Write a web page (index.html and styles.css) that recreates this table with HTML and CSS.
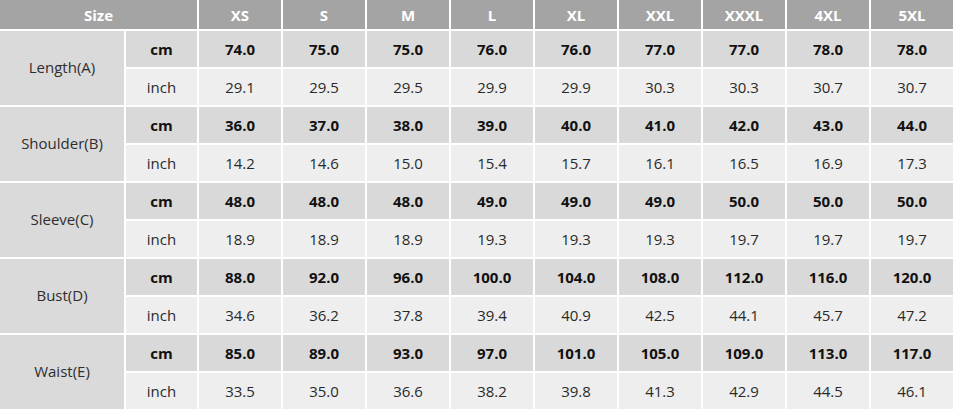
FILE: index.html
```html
<!DOCTYPE html>
<html>
<head>
<meta charset="utf-8">
<link rel="stylesheet" href="styles.css">
</head>
<body>
<div class="chart">
  <div class="cell head size">Size</div>
  <div class="cell head">XS</div>
  <div class="cell head">S</div>
  <div class="cell head">M</div>
  <div class="cell head">L</div>
  <div class="cell head">XL</div>
  <div class="cell head">XXL</div>
  <div class="cell head">XXXL</div>
  <div class="cell head">4XL</div>
  <div class="cell head">5XL</div>

  <div class="cell label">Length(A)</div>
  <div class="cell cm unit">cm</div>
  <div class="cell cm">74.0</div><div class="cell cm">75.0</div><div class="cell cm">75.0</div><div class="cell cm">76.0</div><div class="cell cm">76.0</div><div class="cell cm">77.0</div><div class="cell cm">77.0</div><div class="cell cm">78.0</div><div class="cell cm">78.0</div>
  <div class="cell in unit">inch</div>
  <div class="cell in">29.1</div><div class="cell in">29.5</div><div class="cell in">29.5</div><div class="cell in">29.9</div><div class="cell in">29.9</div><div class="cell in">30.3</div><div class="cell in">30.3</div><div class="cell in">30.7</div><div class="cell in">30.7</div>

  <div class="cell label">Shoulder(B)</div>
  <div class="cell cm unit">cm</div>
  <div class="cell cm">36.0</div><div class="cell cm">37.0</div><div class="cell cm">38.0</div><div class="cell cm">39.0</div><div class="cell cm">40.0</div><div class="cell cm">41.0</div><div class="cell cm">42.0</div><div class="cell cm">43.0</div><div class="cell cm">44.0</div>
  <div class="cell in unit">inch</div>
  <div class="cell in">14.2</div><div class="cell in">14.6</div><div class="cell in">15.0</div><div class="cell in">15.4</div><div class="cell in">15.7</div><div class="cell in">16.1</div><div class="cell in">16.5</div><div class="cell in">16.9</div><div class="cell in">17.3</div>

  <div class="cell label">Sleeve(C)</div>
  <div class="cell cm unit">cm</div>
  <div class="cell cm">48.0</div><div class="cell cm">48.0</div><div class="cell cm">48.0</div><div class="cell cm">49.0</div><div class="cell cm">49.0</div><div class="cell cm">49.0</div><div class="cell cm">50.0</div><div class="cell cm">50.0</div><div class="cell cm">50.0</div>
  <div class="cell in unit">inch</div>
  <div class="cell in">18.9</div><div class="cell in">18.9</div><div class="cell in">18.9</div><div class="cell in">19.3</div><div class="cell in">19.3</div><div class="cell in">19.3</div><div class="cell in">19.7</div><div class="cell in">19.7</div><div class="cell in">19.7</div>

  <div class="cell label">Bust(D)</div>
  <div class="cell cm unit">cm</div>
  <div class="cell cm">88.0</div><div class="cell cm">92.0</div><div class="cell cm">96.0</div><div class="cell cm">100.0</div><div class="cell cm">104.0</div><div class="cell cm">108.0</div><div class="cell cm">112.0</div><div class="cell cm">116.0</div><div class="cell cm">120.0</div>
  <div class="cell in unit">inch</div>
  <div class="cell in">34.6</div><div class="cell in">36.2</div><div class="cell in">37.8</div><div class="cell in">39.4</div><div class="cell in">40.9</div><div class="cell in">42.5</div><div class="cell in">44.1</div><div class="cell in">45.7</div><div class="cell in">47.2</div>

  <div class="cell label">Waist(E)</div>
  <div class="cell cm unit">cm</div>
  <div class="cell cm">85.0</div><div class="cell cm">89.0</div><div class="cell cm">93.0</div><div class="cell cm">97.0</div><div class="cell cm">101.0</div><div class="cell cm">105.0</div><div class="cell cm">109.0</div><div class="cell cm">113.0</div><div class="cell cm">117.0</div>
  <div class="cell in unit">inch</div>
  <div class="cell in">33.5</div><div class="cell in">35.0</div><div class="cell in">36.6</div><div class="cell in">38.2</div><div class="cell in">39.8</div><div class="cell in">41.3</div><div class="cell in">42.9</div><div class="cell in">44.5</div><div class="cell in">46.1</div>
</div>
</body>
</html>
```

FILE: styles.css
```css
html, body {
  margin: 0;
  padding: 0;
  background: #ffffff;
}

.chart {
  display: grid;
  grid-template-columns: 124px 71px repeat(9, 82px);
  grid-template-rows: 29px repeat(10, 36px);
  column-gap: 2px;
  row-gap: 2px;
  width: 953px;
  font-family: "Open Sans", "Noto Sans", sans-serif;
  font-size: 15px;
  color: #2a2a2a;
}

.cell {
  display: flex;
  align-items: center;
  justify-content: center;
}

.head {
  background: #a4a4a4;
  color: #ffffff;
  font-weight: 700;
}

.size {
  grid-column: span 2;
}

.label {
  grid-row: span 2;
  background: #dadada;
  color: #2e2e2e;
  padding-bottom: 2px;
}

.cm {
  background: #d9d9d9;
  font-weight: 700;
  color: #111111;
}

.in {
  background: #eeeeee;
}
```
